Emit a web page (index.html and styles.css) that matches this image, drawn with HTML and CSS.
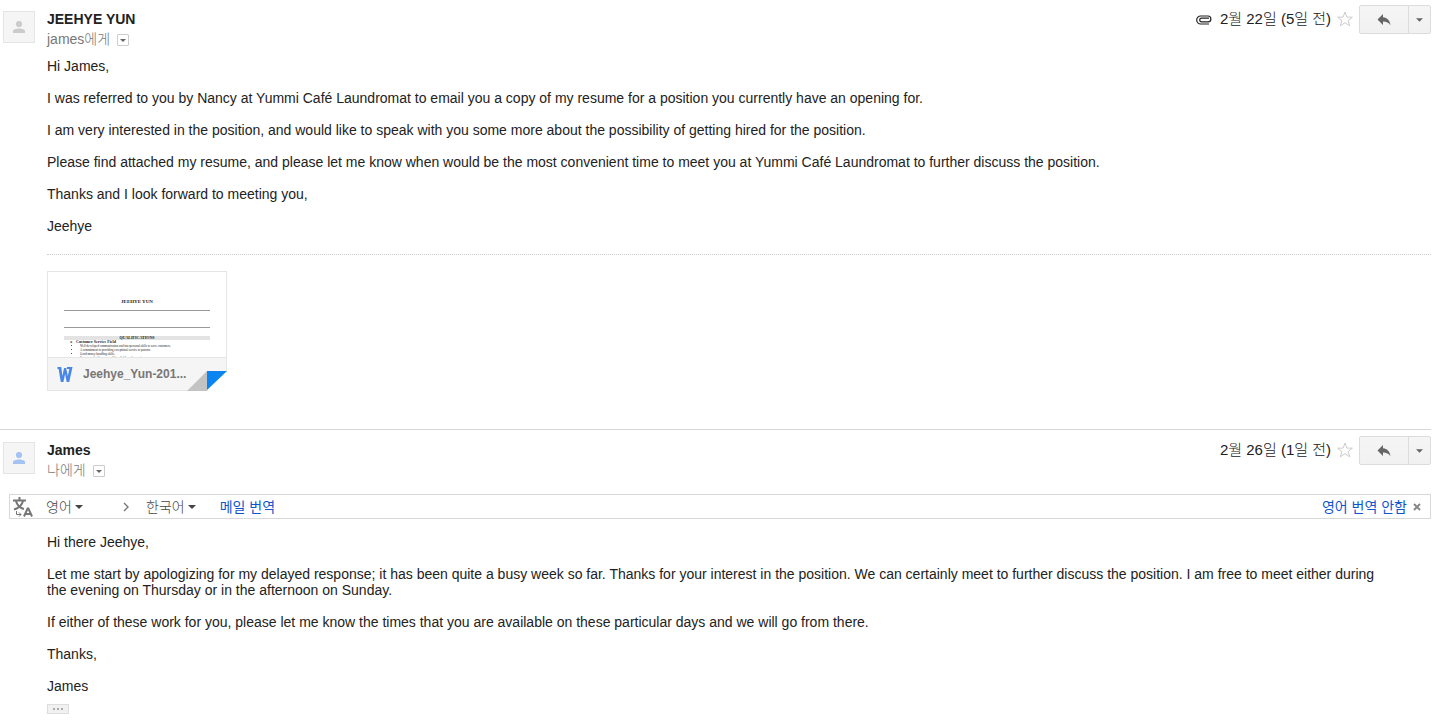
FILE: index.html
```html
<!DOCTYPE html>
<html lang="ko">
<head>
  <meta charset="utf-8">
  <title>메일</title>
  <link rel="stylesheet" href="styles.css">
</head>
<body>
  <svg class="defs" aria-hidden="true">
    <symbol id="person" viewBox="0 0 14 14">
      <circle cx="7" cy="4" r="3.100"/>
      <path d="M1 13v-2c0-1.500 3-2.500 6-2.500s6 1 6 2.500v2z"/>
    </symbol>
    <symbol id="star" viewBox="0 0 16 16">
      <path d="M8 1l1.900 5.100 5.500.1-4.300 3.300 1.600 5.300L8 11.700l-4.700 3.100 1.600-5.300L.6 6.200l5.500-.1z"/>
    </symbol>
    <symbol id="reply" viewBox="0 0 14 12">
      <path d="M6 0v3.200c4.500.6 6.800 3.200 7.500 8-1.700-2.700-4-3.700-7.500-3.800V11L.5 5.400z"/>
    </symbol>
    <symbol id="arrow" viewBox="0 0 8 4">
      <path d="M0 0h8L4 4z"/>
    </symbol>
  </svg>

  <main class="thread">
    <article class="message">
      <header class="head">
        <div class="avatar"><svg><use href="#person"/></svg></div>
        <div class="sender">
          <h2>JEEHYE YUN</h2>
          <div class="to">james에게
            <button class="details" aria-label="세부정보 표시"><svg><use href="#arrow"/></svg></button>
          </div>
        </div>
        <div class="actions">
          <svg class="clip" viewBox="0 0 16 10"><path d="M13 3.200H5.500a1.800 1.800 0 0 0 0 3.600H12A2.900 2.900 0 0 0 12 1H4.700a4 4 0 0 0 0 8H13"/></svg>
          <time>2월 22일 (5일 전)</time>
          <button class="star" aria-label="별표"><svg><use href="#star"/></svg></button>
          <div class="btn-group">
            <button class="reply" aria-label="답장"><svg><use href="#reply"/></svg></button>
            <button class="more" aria-label="더보기"><svg><use href="#arrow"/></svg></button>
          </div>
        </div>
      </header>
      <div class="text">
        <p>Hi James,</p>
        <p>I was referred to you by Nancy at Yummi Café Laundromat to email you a copy of my resume for a position you currently have an opening for.</p>
        <p>I am very interested in the position, and would like to speak with you some more about the possibility of getting hired for the position.</p>
        <p>Please find attached my resume, and please let me know when would be the most convenient time to meet you at Yummi Café Laundromat to further discuss the position.</p>
        <p>Thanks and I look forward to meeting you,</p>
        <p>Jeehye</p>
      </div>
      <div class="attachments">
        <a class="card" href="#">
          <div class="preview">
            <div class="doc-name">JEEHYE YUN</div>
            <div class="doc-box"></div>
            <div class="doc-title">QUALIFICATIONS</div>
            <div class="doc-sub"><span>➤</span>Customer Service Field</div>
            <ul>
              <li>Well-developed communication and interpersonal skills to serve customers.</li>
              <li>A commitment to providing exceptional service to patrons.</li>
              <li>Good money handling skills.</li>
              <li>Strong work ethic, responsible, reliable and proactive.</li>
            </ul>
          </div>
          <div class="file">
            <svg class="word" viewBox="0 0 16 16"><path d="M0 0h4l1.200 9.500L7 1h2.200L11 9.500 12.600 2H10V0h6l-3.500 16H9.800L8.100 7.500 6.300 16H3.500L1.200 2H0z"/></svg>
            <span>Jeehye_Yun-201...</span>
          </div>
          <svg class="fold" viewBox="0 0 40 20"><path fill="#c3c3c3" d="M0 20L20 0v20z"/><path fill="#fff" d="M20 20L40 0v20z"/><path fill="#0a84f0" d="M20 0h20L20 19z"/></svg>
        </a>
      </div>
    </article>

    <article class="message">
      <header class="head">
        <div class="avatar online"><svg><use href="#person"/></svg></div>
        <div class="sender">
          <h2>James</h2>
          <div class="to">나에게
            <button class="details" aria-label="세부정보 표시"><svg><use href="#arrow"/></svg></button>
          </div>
        </div>
        <div class="actions">
          <time>2월 26일 (1일 전)</time>
          <button class="star" aria-label="별표"><svg><use href="#star"/></svg></button>
          <div class="btn-group">
            <button class="reply" aria-label="답장"><svg><use href="#reply"/></svg></button>
            <button class="more" aria-label="더보기"><svg><use href="#arrow"/></svg></button>
          </div>
        </div>
      </header>
      <div class="translate">
        <svg class="lang-icon" viewBox="0 0 20 20"><path d="M0 3.500h13M6.500 0v3.500M3 4c1 4 4 7 8 8M10 4c-1 4-4 7-9 8.500"/><path class="thin" d="M3.500 14v3.500H8M6 15.500l2 2-2 2"/><path d="M11 19.500l3.600-8h.8l3.600 8M12.500 17h5"/></svg>
        <button class="lang from">영어<svg><use href="#arrow"/></svg></button>
        <svg class="chevron" viewBox="0 0 6 10"><path d="M1 1l4 4-4 4"/></svg>
        <button class="lang">한국어<svg><use href="#arrow"/></svg></button>
        <a class="run" href="#">메일 번역</a>
        <a class="never" href="#">영어 번역 안함</a>
        <button class="close" aria-label="닫기"><svg viewBox="0 0 8 8"><path d="M1 1l6 6M7 1L1 7"/></svg></button>
      </div>
      <div class="text">
        <p>Hi there Jeehye,</p>
        <p>Let me start by apologizing for my delayed response; it has been quite a busy week so far. Thanks for your interest in the position. We can certainly meet to further discuss the position. I am free to meet either during the evening on Thursday or in the afternoon on Sunday.</p>
        <p>If either of these work for you, please let me know the times that you are available on these particular days and we will go from there.</p>
        <p>Thanks,</p>
        <p>James</p>
      </div>
      <button class="trimmed" aria-label="생략된 내용 표시"><i></i><i></i><i></i></button>
    </article>
  </main>
</body>
</html>
```

FILE: styles.css
```css
* {
  box-sizing: border-box;
}
body {
  margin: 0;
  background: #fff;
  color: #222;
  font: 300 14px/16px "Liberation Sans", "Noto Sans CJK KR", sans-serif;
}
button {
  padding: 0;
  border: 0;
  background: none;
  color: inherit;
  font: inherit;
  cursor: pointer;
}
svg {
  display: block;
  flex: none;
}
a {
  color: #15c;
  text-decoration: none;
}
.defs {
  display: none;
}
.thread {
  padding-right: 12px;
}
.message + .message {
  margin-top: 38px;
  border-top: 1px solid #d8d8d8;
}

/* header */
.head {
  display: flex;
  align-items: flex-start;
  height: 58px;
  padding: 5px 0 0 3px;
}
.message + .message .head {
  height: 64px;
  padding-top: 6px;
}
.avatar {
  display: flex;
  align-items: center;
  justify-content: center;
  width: 32px;
  height: 32px;
  margin: 6px 12px 0 0;
  border: 1px solid #e5e5e5;
  background: #f5f5f5;
  fill: #cbcbcb;
}
.avatar svg {
  width: 14px;
  height: 14px;
}
.online {
  fill: #a4c2f4;
}
.sender {
  flex: 1;
  padding-top: 4px;
}
h2 {
  margin: 0;
  font-size: 14px;
  line-height: 20px;
}
.to {
  display: flex;
  align-items: center;
  gap: 7px;
  color: #777;
  line-height: 20px;
}
.details {
  display: flex;
  align-items: center;
  justify-content: center;
  width: 12px;
  height: 12px;
  margin-top: 2px;
  border: 1px solid #ccc;
  border-radius: 1px;
  fill: #666;
}
.details svg {
  width: 6px;
  height: 3px;
}
.actions {
  display: flex;
  align-items: center;
}
.actions time {
  padding-bottom: 2px;
  font-size: 15px;
}
.clip {
  width: 16px;
  height: 10px;
  margin-right: 8px;
  fill: none;
  stroke: #222;
  stroke-width: 1.2;
}
.star {
  margin: 0 6px;
  padding-bottom: 2px;
}
.star svg {
  width: 16px;
  height: 16px;
  fill: #fff;
  stroke: #ccc;
}
.btn-group {
  display: flex;
  border: 1px solid #dcdcdc;
  border-radius: 2px;
  background: linear-gradient(#f5f5f5, #f1f1f1);
  fill: #666;
}
.btn-group button {
  display: flex;
  align-items: center;
  justify-content: center;
  height: 27px;
}
.btn-group .reply {
  width: 48px;
}
.reply svg {
  width: 14px;
  height: 12px;
}
.more {
  width: 22px;
}
.btn-group .more {
  border-left: 1px solid #dcdcdc;
}
.more svg {
  width: 7px;
  height: 4px;
}

/* message text */
.text {
  padding: 0 40px 0 47px;
}
.text p {
  margin: 0 0 16px;
}

/* attachment */
.attachments {
  margin: 20px 0 0 47px;
  padding-top: 16px;
  border-top: 1px dotted #ccc;
}
.card {
  display: block;
  position: relative;
  width: 180px;
  height: 120px;
  border: 1px solid #e5e5e5;
}
.preview {
  height: 85px;
  padding: 27px 16px 0;
  overflow: hidden;
  color: #222;
  font: 3px/4px "Liberation Serif", serif;
}
.doc-name {
  height: 11px;
  font-size: 5px;
  line-height: 6px;
  font-weight: bold;
  text-align: center;
}
.doc-box {
  height: 18px;
  border: solid #999;
  border-width: 1px 0;
}
.doc-title {
  margin-top: 8px;
  background: #e3e3e3;
  font-size: 4px;
  font-weight: bold;
  text-align: center;
}
.doc-sub {
  font-size: 4px;
  font-weight: bold;
}
.doc-sub span {
  display: inline-block;
  width: 12px;
  padding-left: 6px;
  font-size: 3px;
}
.preview ul {
  margin: 0;
  padding: 0 0 0 16px;
  list-style-position: outside;
}
.file {
  display: flex;
  align-items: center;
  gap: 10px;
  height: 33px;
  padding-left: 9px;
  border-top: 1px solid #e5e5e5;
  background: #f5f5f5;
  color: #777;
  font-size: 12px;
  font-weight: bold;
}
.word {
  width: 16px;
  height: 15px;
  fill: #4986e7;
}
.fold {
  position: absolute;
  right: -1px;
  bottom: -1px;
  width: 40px;
  height: 20px;
}

/* translate bar */
.translate {
  display: flex;
  align-items: center;
  height: 25px;
  margin: 0 0 15px 9px;
  padding: 0 9px 0 3px;
  border: 1px solid #d8d8d8;
  color: #444;
}
.translate a {
  font-weight: 400;
}
.lang-icon {
  width: 20px;
  height: 20px;
  margin-right: 13px;
  fill: none;
  stroke: #777;
  stroke-width: 2;
}
.thin {
  stroke-width: 1;
}
.lang {
  display: flex;
  align-items: center;
  gap: 3px;
}
.from {
  width: 77px;
}
.lang svg {
  width: 8px;
  height: 4px;
  fill: #444;
}
.chevron {
  width: 6px;
  height: 10px;
  margin-right: 17px;
  fill: none;
  stroke: #777;
  stroke-width: 1.4;
}
.run {
  margin-left: 24px;
}
.never {
  margin-left: auto;
}
.close {
  margin-left: 6px;
}
.close svg {
  width: 8px;
  height: 8px;
  stroke: #888;
  stroke-width: 2;
}
.trimmed {
  display: flex;
  align-items: center;
  justify-content: center;
  gap: 2px;
  width: 22px;
  height: 10px;
  margin: -6px 0 6px 47px;
  border: 1px solid #ddd;
  background: #f1f1f1;
}
.trimmed i {
  width: 2px;
  height: 2px;
  background: #aaa;
}
```
